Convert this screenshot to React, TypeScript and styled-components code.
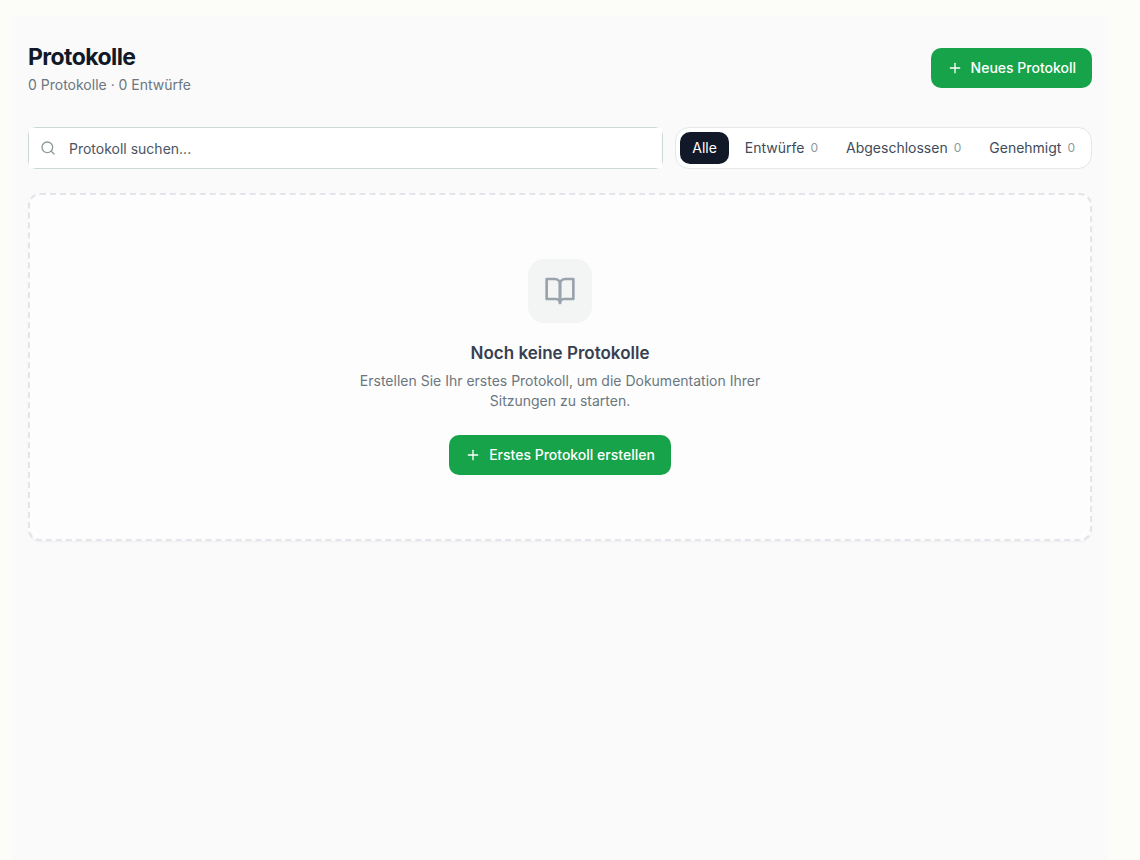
import React, { useState } from "react";
import styled, { createGlobalStyle } from "styled-components";
import { Plus, Search } from "lucide-react";

const GlobalStyle = createGlobalStyle`
  *, *::before, *::after { box-sizing: border-box; }
  body {
    margin: 0;
    background: #fcfdf8;
    color: #111827;
    font-family: Inter, "Liberation Sans", sans-serif;
    font-size: 14px;
    line-height: 20px;
  }
  h1, h2, p { margin: 0; }
  button, input { font: inherit; }
`;

const Page = styled.div`
  display: flex;
  min-height: 100vh;
  padding: 16px 32px 0 12px;
`;

const Panel = styled.main`
  flex: 1;
  min-width: 0;
  display: flex;
  flex-direction: column;
  gap: 24px;
  padding: 24px 16px;
  background: #fafafa;
`;

const Header = styled.header`
  display: flex;
  align-items: center;
  justify-content: space-between;
  gap: 16px;
  padding-bottom: 8px;
`;

const Title = styled.h1`
  font-size: 23px;
  line-height: 35px;
  font-weight: 700;
  letter-spacing: -0.025em;
  color: #111827;
`;

const Summary = styled.p`
  color: #6b7780;
`;

const PrimaryButton = styled.button`
  display: inline-flex;
  align-items: center;
  gap: 8px;
  height: 40px;
  padding: 0 16px;
  border: 0;
  border-radius: 10px;
  background: #16a34a;
  color: #fff;
  font-weight: 500;
  cursor: pointer;
`;

const Toolbar = styled.div`
  display: flex;
  align-items: stretch;
  gap: 12px;
`;

const SearchFrame = styled.label`
  flex: 1;
  min-width: 0;
  display: flex;
  height: 42px;
  border: 1px solid #cbdad5;
  border-radius: 8px;
`;

const SearchField = styled.span`
  flex: 1;
  min-width: 0;
  display: flex;
  align-items: center;
  gap: 13px;
  padding: 0 11px;
  background: #fff;
  color: #8b9a9b;
`;

const SearchInput = styled.input`
  flex: 1;
  min-width: 0;
  height: 40px;
  padding: 0;
  border: 0;
  outline: 0;
  background: transparent;
  color: #374151;
  &::placeholder { color: #4b5563; opacity: 1; }
`;

const Filters = styled.div`
  display: flex;
  gap: 4px;
  padding: 4px;
  border: 1px solid #e5e7eb;
  border-radius: 14px;
  background: #fff;
`;

const FilterButton = styled.button<{ $active: boolean }>`
  display: flex;
  align-items: center;
  gap: 6px;
  height: 32px;
  padding: 0 12px;
  border: 0;
  border-radius: 10px;
  background: ${(p) => (p.$active ? "#111827" : "transparent")};
  color: ${(p) => (p.$active ? "#fff" : "#404b5a")};
  white-space: nowrap;
  cursor: pointer;
`;

const Count = styled.span`
  font-size: 12px;
  color: #8b9a9b;
`;

const EmptyCard = styled.section`
  display: flex;
  flex-direction: column;
  align-items: center;
  padding: 64px 24px;
  border: 2px dashed #e2e6ea;
  border-radius: 12px;
  background: #fdfdfd;
  box-shadow: 0 1px 2px rgba(0, 0, 0, 0.05);
  text-align: center;
`;

const IconTile = styled.div`
  display: grid;
  place-items: center;
  width: 64px;
  height: 64px;
  margin-bottom: 16px;
  border-radius: 16px;
  background: #f3f5f5;
  color: #99a3ab;
`;

const EmptyTitle = styled.h2`
  font-size: 17px;
  line-height: 28px;
  font-weight: 600;
  color: #374151;
`;

const EmptyText = styled.p`
  max-width: 448px;
  margin: 4px 0 24px;
  color: #6b7780;
`;

const BookIcon = () => (
  <svg
    width="32"
    height="32"
    viewBox="0 0 24 24"
    fill="none"
    stroke="currentColor"
    strokeWidth="2"
    strokeLinecap="round"
    strokeLinejoin="round"
    aria-hidden
  >
    <path d="M2 3h6a4 4 0 0 1 4 4v14a3 3 0 0 0-3-3H2z" />
    <path d="M22 3h-6a4 4 0 0 0-4 4v14a3 3 0 0 1 3-3h7z" />
  </svg>
);

const filters = [
  { name: "Alle" },
  { name: "Entwürfe", count: 0 },
  { name: "Abgeschlossen", count: 0 },
  { name: "Genehmigt", count: 0 },
];

export default function App() {
  const [active, setActive] = useState("Alle");
  const [query, setQuery] = useState("");

  return (
    <>
      <GlobalStyle />
      <Page>
        <Panel>
          <Header>
            <div>
              <Title>Protokolle</Title>
              <Summary>0 Protokolle · 0 Entwürfe</Summary>
            </div>
            <PrimaryButton type="button">
              <Plus size={16} strokeWidth={2} aria-hidden />
              Neues Protokoll
            </PrimaryButton>
          </Header>

          <Toolbar>
            <SearchFrame>
              <SearchField>
                <Search size={16} strokeWidth={2} aria-hidden />
                <SearchInput
                  type="text"
                  aria-label="Protokoll suchen"
                  placeholder="Protokoll suchen..."
                  value={query}
                  onChange={(e) => setQuery(e.target.value)}
                />
              </SearchField>
            </SearchFrame>
            <Filters>
              {filters.map((f) => (
                <FilterButton
                  key={f.name}
                  type="button"
                  $active={active === f.name}
                  aria-pressed={active === f.name}
                  onClick={() => setActive(f.name)}
                >
                  {f.name}
                  {f.count !== undefined && <Count>{f.count}</Count>}
                </FilterButton>
              ))}
            </Filters>
          </Toolbar>

          <EmptyCard>
            <IconTile>
              <BookIcon />
            </IconTile>
            <EmptyTitle>Noch keine Protokolle</EmptyTitle>
            <EmptyText>
              Erstellen Sie Ihr erstes Protokoll, um die Dokumentation Ihrer Sitzungen zu starten.
            </EmptyText>
            <PrimaryButton type="button">
              <Plus size={16} strokeWidth={2} aria-hidden />
              Erstes Protokoll erstellen
            </PrimaryButton>
          </EmptyCard>
        </Panel>
      </Page>
    </>
  );
}
